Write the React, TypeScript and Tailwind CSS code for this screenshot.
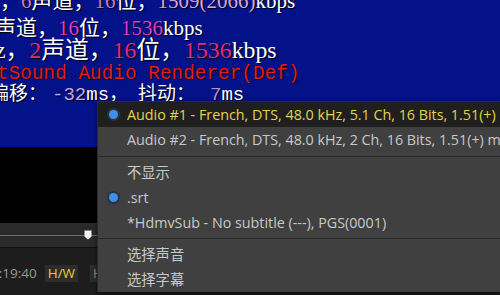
import React from "react";

const serif = "font-['Liberation_Serif','Noto_Sans_CJK_SC',serif]";
const mono = "font-['Liberation_Mono','Noto_Sans_CJK_SC',monospace]";

function Stats() {
  return (
    <div className={`h-[147px] bg-[#04128a] text-white ${serif} text-[21px] leading-none overflow-hidden [text-shadow:1px_1px_1px_#000]`}>
      <div className="h-[21px] -mt-[9px] whitespace-nowrap">
        ，<span className="text-[#c77ac9]">6</span>声道，<span className="text-[#c77ac9]">16</span>位，
        <span className="text-[#d6a6dc]">1509(2066)</span>kbps
      </div>
      <div className="h-[21px] mt-[6px] -ml-[5px] whitespace-nowrap">
        声道，<span className="text-[#dd3fc6]">16</span>位，<span className="text-[#dd3fc6]">1536</span>kbps
      </div>
      <div className="h-[26px] -ml-[5px] whitespace-nowrap text-[23.8px]">
        z，<span className="text-[#e42b7c]">2</span>声道，<span className="text-[#e42b7c]">16</span>位，
        <span className="text-[#e42b7c]">1536</span>kbps
      </div>
      <div className={`h-[21px] -ml-[3px] whitespace-nowrap text-[#e01c1c] ${mono} text-[19.4px]`}>
        tSound Audio Renderer(Def)
      </div>
      <div className={`h-[22px] -ml-[10px] whitespace-nowrap ${mono} text-[19px]`}>
        偏移：<span className="ml-[5px] text-[#c6a8e6]">-32</span>ms，<span className="ml-[10px]">抖动：</span>
        <span className="ml-[15px] text-[#b98ae6]">7</span>ms
      </div>
    </div>
  );
}

function Radio() {
  return (
    <span className="w-[9px] h-[9px] rounded-full bg-[#3d8fe8] shadow-[0_0_0_2px_#2a3340]" />
  );
}

function Item({ label, active, checked }: { label: string; active?: boolean; checked?: boolean }) {
  return (
    <div
      className={`h-[25px] flex items-center whitespace-nowrap ${
        active ? "bg-[#1f1f1f] text-[#e6d24a]" : "text-[#c9c9c9]"
      }`}
    >
      <div className="w-[29px] shrink-0 flex justify-center pl-[1px]">{checked && <Radio />}</div>
      <span>{label}</span>
    </div>
  );
}

function Sep() {
  return <div className="h-[1px] bg-[#2b2b2b] my-[1px]" />;
}

function Menu() {
  return (
    <div className="absolute left-[97px] top-[101px] right-0 bottom-[3px] bg-[#404040] border-l border-t border-[#2a2a2a] font-['Open_Sans','Noto_Sans_CJK_SC',sans-serif] text-[14.3px] overflow-hidden shadow-[0_2px_4px_rgba(0,0,0,0.6)]">
      <Item label="Audio #1 - French, DTS, 48.0 kHz, 5.1 Ch, 16 Bits, 1.51(+) mixed" active checked />
      <Item label="Audio #2 - French, DTS, 48.0 kHz, 2 Ch, 16 Bits, 1.51(+) mixed" />
      <div className="h-[3px]" />
      <Sep />
      <div className="h-[2px]" />
      <Item label="不显示" />
      <Item label=".srt" checked />
      <Item label="*HdmvSub - No subtitle (---), PGS(0001)" />
      <div className="h-[2px]" />
      <Sep />
      <div className="h-[2px]" />
      <Item label="选择声音" />
      <Item label="选择字幕" />
    </div>
  );
}

export default function App() {
  return (
    <div className="relative w-[500px] h-[295px] overflow-hidden bg-black">
      <Stats />
      <div className="h-[76px] bg-black" />
      {/* seek bar */}
      <div className="relative h-[24px] bg-[#2a2a2a] flex items-center">
        <div className="w-full h-[1px] bg-[#6b6b6b]" />
        <svg className="absolute left-[84px] top-[7px]" width="8" height="10" viewBox="0 0 8 10">
          <path d="M0.5 0.5H7.5V6.5L4 9.5L0.5 6.5Z" fill="#f2f2f2" />
        </svg>
      </div>
      <div className="h-[1px] bg-[#111]" />
      {/* toolbar */}
      <div className="h-[47px] bg-[#1d1d1d] flex items-center gap-[8px] pt-[3px] font-['Open_Sans',sans-serif] text-[13.5px]">
        <span className="-ml-[9px] text-[#9a9a9a]">0:19:40</span>
        <span className="px-[3px] h-[17px] flex items-center bg-[#2c2c2c] text-[#e3cf3c]">H/W</span>
        <span className="ml-[4px] px-[3px] h-[17px] flex items-center bg-[#2c2c2c] text-[#8a8a8a]">HDR</span>
      </div>
      <Menu />
    </div>
  );
}
